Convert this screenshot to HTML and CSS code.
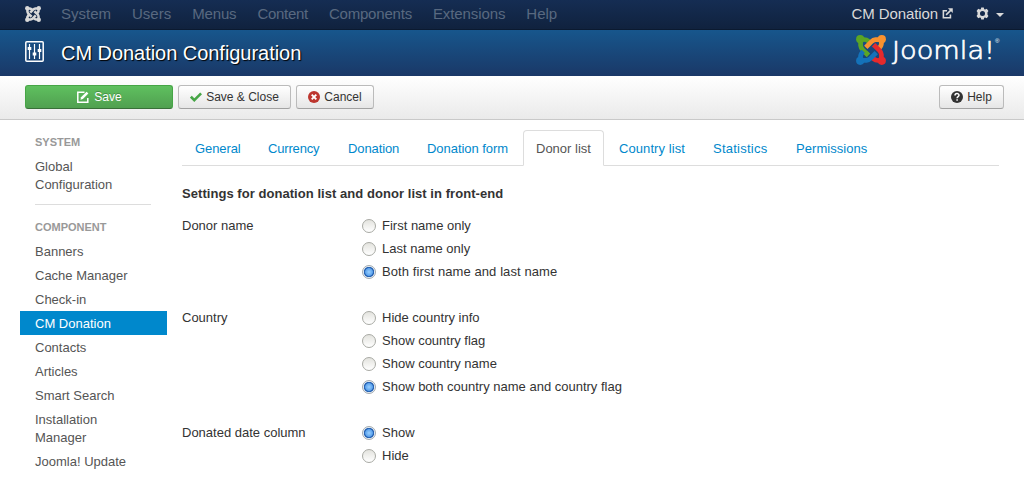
FILE: index.html
```html
<!DOCTYPE html>
<html lang="en">
<head>
<meta charset="utf-8">
<title>CM Donation Configuration</title>
<link rel="stylesheet" href="styles.css">
</head>
<body>
<svg class="defs" width="0" height="0">
  <defs>
    <g id="arm" fill="none" stroke-linejoin="round">
      <circle cx="4.200" cy="4.200" r="4.100" fill="currentColor"/>
      <path d="M4.600 6v4.500q.2 2.300 2.200 4.300l5.600 5.400M6 4.700q4-.8 6.500 1.500l1.200 1.200" stroke="currentColor" stroke-width="4.700"/>
    </g>
  </defs>
</svg>
<nav class="navbar">
  <svg class="brand" viewBox="0 0 30 30"><use href="#arm"/><use href="#arm" transform="rotate(90 15 15)"/><use href="#arm" transform="rotate(180 15 15)"/><use href="#arm" transform="rotate(270 15 15)"/></svg>
  <ul class="menu">
    <li>System</li><li>Users</li><li>Menus</li><li>Content</li><li>Components</li><li>Extensions</li><li>Help</li>
  </ul>
  <span class="site">CM Donation</span>
  <svg class="external" viewBox="0 0 12 12" fill="none" stroke="currentColor" stroke-width="1.700"><path d="M5.500 3H1.500v7.700H9.200V7M4.500 7.500 10 2"/><path d="M6.500.3h5.200v5.200z" fill="currentColor" stroke="none"/></svg>
  <svg class="gear" viewBox="0 0 14 14"><path fill="currentColor" fill-rule="evenodd" d="M5.600.5h2.800l.4 1.800 1 .5 1.800-.8 1.800 2.200-1.100 1.600.1 1.200-.1 1.200 1.100 1.600-1.800 2.200-1.800-.8-1 .5-.4 1.800H5.600l-.4-1.800-1-.5-1.800.8L.6 9.800l1.100-1.600L1.600 7l.1-1.200L.6 4.200 2.400 2l1.800.8 1-.5zM7 4.300a2.700 2.700 0 1 0 0 5.400 2.700 2.700 0 0 0 0-5.400z"/></svg>
  <span class="caret"></span>
</nav>
<header class="header">
  <svg class="equalizer" viewBox="0 0 19 21" fill="none" stroke="#fff"><rect x=".8" y=".8" width="17.400" height="19.400" rx="1" stroke-width="1.500"/><path d="M4.500 3v15M9.500 3v15M14.500 3v15" stroke-width="1.200"/><path d="M2.700 7.500h3.600M7.700 13h3.600M12.700 9.500h3.600" stroke-width="2.800"/></svg>
  <h1>CM Donation Configuration</h1>
  <div class="logo">
    <svg class="mark" viewBox="0 0 30 30">
      <use href="#arm" class="green"/>
      <use href="#arm" class="orange" transform="rotate(90 15 15)"/>
      <use href="#arm" class="red" transform="rotate(180 15 15)"/>
      <use href="#arm" class="blue" transform="rotate(270 15 15)"/>
      <path d="m9.500 17.500 2.900 2.700" class="green" stroke="currentColor" stroke-width="4.700"/>
    </svg>
    <svg class="wordmark" viewBox="0 0 112 32"><text x="3" y="25" textLength="103" lengthAdjust="spacingAndGlyphs">Joomla!</text><text x="106" y="9" class="reg">®</text></svg>
  </div>
</header>
<div class="toolbar">
  <button class="btn save"><svg viewBox="0 0 12 12" fill="none" stroke="currentColor" stroke-width="1.500"><path d="M7.500 1.200H.8v10h10V7"/><path d="m3.500 8.700.5-2.400L9.600.700l1.800 1.800L5.900 8z" fill="currentColor" stroke="none"/></svg>Save</button>
  <button class="btn apply"><svg viewBox="0 0 12 12" fill="none" stroke="#46a546" stroke-width="2.600"><path d="m.9 5.700 3.400 3.400 6.800-6.700"/></svg>Save &amp; Close</button>
  <button class="btn cancel"><svg viewBox="0 0 12 12"><circle cx="6" cy="6" r="6" fill="#bd362f"/><path d="m3.700 3.700 4.600 4.600m0-4.600L3.700 8.300" stroke="#fff" stroke-width="1.900"/></svg>Cancel</button>
  <button class="btn help"><svg viewBox="0 0 12 12"><circle cx="6" cy="6" r="6" fill="#333"/><path d="M4 4.500C4 2 8 2 8 4.300 8 5.700 6.100 5.500 6.100 7.200M6.100 8.200v1.500" fill="none" stroke="#fff" stroke-width="1.500"/></svg>Help</button>
</div>
<div class="page">
  <aside class="sidebar">
    <h2>SYSTEM</h2>
    <a>Global<br>Configuration</a>
    <hr>
    <h2>COMPONENT</h2>
    <a>Banners</a><a>Cache Manager</a><a>Check-in</a><a class="active">CM Donation</a><a>Contacts</a><a>Articles</a><a>Smart Search</a><a>Installation<br>Manager</a><a>Joomla! Update</a>
  </aside>
  <main class="content">
    <ul class="tabs">
      <li>General</li><li>Currency</li><li>Donation</li><li>Donation form</li><li class="active">Donor list</li><li>Country list</li><li>Statistics</li><li>Permissions</li>
    </ul>
    <p class="description">Settings for donation list and donor list in front-end</p>
    <div class="field"><span class="label">Donor name</span><div class="options">
      <label><input type="radio" name="name">First name only</label>
      <label><input type="radio" name="name">Last name only</label>
      <label class="spaced"><input type="radio" name="name" checked>Both first name and last name</label>
    </div></div>
    <div class="field"><span class="label">Country</span><div class="options">
      <label><input type="radio" name="country">Hide country info</label>
      <label><input type="radio" name="country">Show country flag</label>
      <label><input type="radio" name="country">Show country name</label>
      <label><input type="radio" name="country" checked>Show both country name and country flag</label>
    </div></div>
    <div class="field"><span class="label">Donated date column</span><div class="options">
      <label><input type="radio" name="date" checked>Show</label>
      <label><input type="radio" name="date">Hide</label>
    </div></div>
  </main>
</div>
</body>
</html>
```

FILE: styles.css
```css
* { box-sizing: border-box; }
html, body { height: 477px; overflow: hidden; }
body { margin: 0; background: #fff; color: #333; font: 13px/18px "Liberation Sans", Arial, sans-serif; }
svg { flex: none; display: block; }
.defs { position: absolute; }
ul { list-style: none; margin: 0; padding: 0; display: flex; }

.navbar { height: 30px; display: flex; align-items: center; padding: 0 20px 2px 25px; background: linear-gradient(#152d53, #10223e); border-bottom: 1px solid #0b1a30; color: #d9d9d9; font-size: 15px; }
.brand { width: 16px; height: 16px; margin-right: 20px; }
.menu { gap: 21px; color: #596980; flex: 1; }
.menu li:nth-child(3) { letter-spacing: -.15px; }
.menu li:nth-child(4) { letter-spacing: -.3px; }
.menu li:nth-child(5) { letter-spacing: -.2px; }
.menu li:nth-child(6) { letter-spacing: -.1px; }
.site { letter-spacing: -.1px; }
.external { width: 11px; height: 11px; margin: 0 23px 0 4px; }
.gear { width: 13px; height: 13px; margin-right: 7px; }
.caret { border: 4px solid transparent; border-top-color: #d9d9d9; border-bottom: 0; margin-top: 2px; }

.header { height: 46px; display: flex; align-items: center; padding: 0 24px 0 25px; background: linear-gradient(#17568c, #1a3867); }
.equalizer { width: 19px; height: 21px; margin: 0 17px 4px 0; }
h1 { margin: 0; flex: 1; color: #fff; font-size: 20px; font-weight: normal; line-height: 46px; letter-spacing: -.04px; text-shadow: 1px 1px 1px #000; }
.logo { display: flex; height: 32px; margin-bottom: 6px; }
.mark { width: 30px; height: 30px; margin: 1px 3px 0 0; }
.wordmark { width: 112px; height: 32px; margin-right: -1px; overflow: visible; fill: #fff; stroke: #fff; stroke-width: .7px; font: 200 25px "DejaVu Sans Light", "DejaVu Sans", sans-serif; }
.reg { font: 6px "Liberation Sans", sans-serif; stroke: none; }
.green { color: #5ba525; }
.orange { color: #f9922f; }
.red { color: #e52a2c; }
.blue { color: #1472b9; }

.toolbar { height: 44px; display: flex; align-items: flex-start; gap: 5px; padding: 9px 20px 0 25px; background: linear-gradient(#fff, #eaeaea); border-bottom: 1px solid #c9c9c9; }
.btn { height: 24px; display: flex; align-items: center; justify-content: center; gap: 4px; padding: 0; border: 1px solid #bbb; border-bottom-color: #a2a2a2; border-radius: 3px; background: linear-gradient(#fff, #e6e6e6); color: #333; font: 12px/18px "Liberation Sans", Arial, sans-serif; }
.btn svg { width: 12px; height: 12px; margin-bottom: 1px; }
.save { width: 148px; padding-left: 1px; gap: 5px; color: #fff; background: linear-gradient(#5fc05f, #50a050); border-color: #46a546 #46a546 #387038; text-shadow: 0 -1px 0 rgba(0,0,0,.25); }
.apply { width: 113px; }
.cancel { width: 78px; }
.help { width: 65px; margin-left: auto; }

.page { display: flex; padding: 10px 25px 0 20px; }
.sidebar { width: 147px; margin-right: 15px; }
h2 { margin: 0; padding: 3px 15px; color: #999; font-size: 11px; line-height: 18px; text-shadow: 0 1px 0 rgba(255,255,255,.5); }
.sidebar a { display: block; padding: 4px 15px 2px; color: #555; }
.sidebar .active { background: #08c; color: #fff; }
hr { margin: 8px 16px 10px 15px; border: 0; border-top: 1px solid #ddd; }

.content { flex: 1; }
.tabs { height: 36px; border-bottom: 1px solid #ddd; gap: 2px; }
.tabs li { height: 36px; padding: 9px 0 8px 12px; border: 1px solid transparent; color: #08c; white-space: nowrap; }
.tabs li:nth-child(1) { width: 71px; letter-spacing: -.1px; }
.tabs li:nth-child(2) { width: 78px; letter-spacing: -.17px; }
.tabs li:nth-child(3) { width: 77px; letter-spacing: -.1px; }
.tabs li:nth-child(4) { width: 107px; letter-spacing: -.05px; }
.tabs li:nth-child(5) { width: 81px; }
.tabs li:nth-child(6) { width: 92px; letter-spacing: .08px; }
.tabs li:nth-child(7) { width: 81px; letter-spacing: .25px; }
.tabs li:nth-child(8) { width: 98px; letter-spacing: .05px; }
.tabs .active { color: #555; background: #fff; border-color: #ddd #ddd #fff; border-radius: 4px 4px 0 0; }
.description { margin: 19px 0 14px; font-weight: bold; letter-spacing: .05px; }
.field { display: flex; margin-bottom: 23px; }
.label { width: 180px; }
.options label { display: flex; height: 23px; }
.options .spaced { letter-spacing: .09px; }
input { appearance: none; width: 14px; height: 14px; margin: 2px 6px 0 0; border: 1px solid #a8aaa4; border-radius: 50%; background: linear-gradient(#e3e3de, #fff); }
input:checked { border-color: #a3a9ae; background: radial-gradient(circle at 50% 50%, #9bd0ff 0, #5da4ed 3.500px, #2964b4 4.300px, #2964b4 4.900px, #e3edf5 5.500px); }
```
